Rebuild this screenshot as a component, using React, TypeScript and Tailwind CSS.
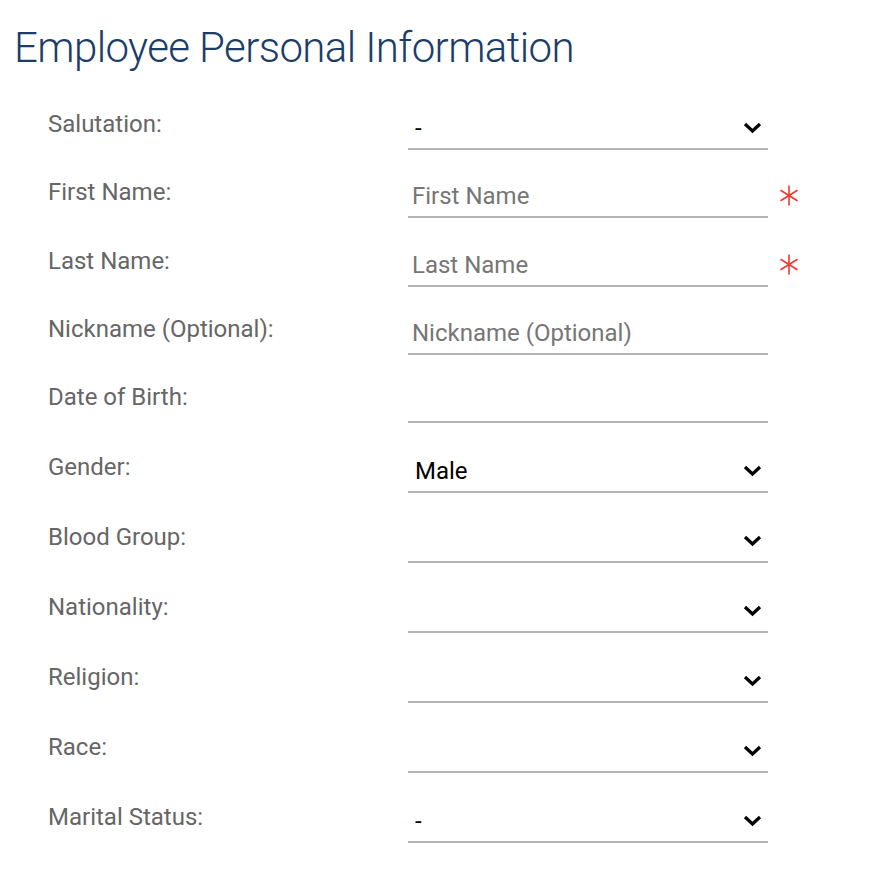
import React from "react";

type Field = {
  label: string;
  kind: "select" | "text";
  value?: string;
  placeholder?: string;
  required?: boolean;
  h: string;
};

const fields: Field[] = [
  { label: "Salutation:", kind: "select", value: "-", h: "h-[76px]" },
  { label: "First Name:", kind: "text", placeholder: "First Name", required: true, h: "h-[68px]" },
  { label: "Last Name:", kind: "text", placeholder: "Last Name", required: true, h: "h-[69px]" },
  { label: "Nickname (Optional):", kind: "text", placeholder: "Nickname (Optional)", h: "h-[68px]" },
  { label: "Date of Birth:", kind: "text", h: "h-[68px]" },
  { label: "Gender:", kind: "select", value: "Male", h: "h-[70px]" },
  { label: "Blood Group:", kind: "select", h: "h-[70px]" },
  { label: "Nationality:", kind: "select", h: "h-[70px]" },
  { label: "Religion:", kind: "select", h: "h-[70px]" },
  { label: "Race:", kind: "select", h: "h-[70px]" },
  { label: "Marital Status:", kind: "select", value: "-", h: "h-[70px]" },
];

const Chevron = () => (
  <svg width="19" height="12" viewBox="0 0 19 12" className="shrink-0">
    <polyline points="2,2 9.5,9 17,2" fill="none" stroke="#000" strokeWidth="3.2" />
  </svg>
);

const Asterisk = () => (
  <svg width="20" height="21" viewBox="0 0 20 21">
    <g stroke="#f0382b" strokeWidth="1.6" strokeLinecap="round">
      <line x1="10" y1="1" x2="10" y2="20" />
      <line x1="2" y1="5.5" x2="18" y2="15.5" />
      <line x1="2" y1="15.5" x2="18" y2="5.5" />
    </g>
  </svg>
);

const Row = ({ f }: { f: Field }) => (
  <div className={`flex items-end ${f.h}`}>
    <div className="w-[408px] shrink-0 pl-[48px] pb-[12px] text-[24px] leading-[28px] text-[#666666]">
      {f.label}
    </div>
    <div className="flex h-[44px] w-[360px] shrink-0 items-center justify-between border-b-2 border-[#b5b5b5] pl-1 pr-[6px] pt-[2px] text-[24px]">
      {f.kind === "select" ? (
        <>
          <span className="pl-[3px] text-black">{f.value ?? ""}</span>
          <Chevron />
        </>
      ) : (
        <span className="text-[#767676]">{f.placeholder ?? ""}</span>
      )}
    </div>
    {f.required && (
      <div className="ml-[11px] pb-[12px]">
        <Asterisk />
      </div>
    )}
  </div>
);

export default function App() {
  return (
    <div className="min-h-screen bg-white font-['Roboto',sans-serif]">
      <h1 className="pl-[14px] pt-[22px] text-[42px] font-light leading-[52px] tracking-[-0.6px] text-[#1d3d69]">
        Employee Personal Information
      </h1>
      <div className="flex flex-col">
        {fields.map((f) => (
          <Row key={f.label} f={f} />
        ))}
      </div>
    </div>
  );
}
